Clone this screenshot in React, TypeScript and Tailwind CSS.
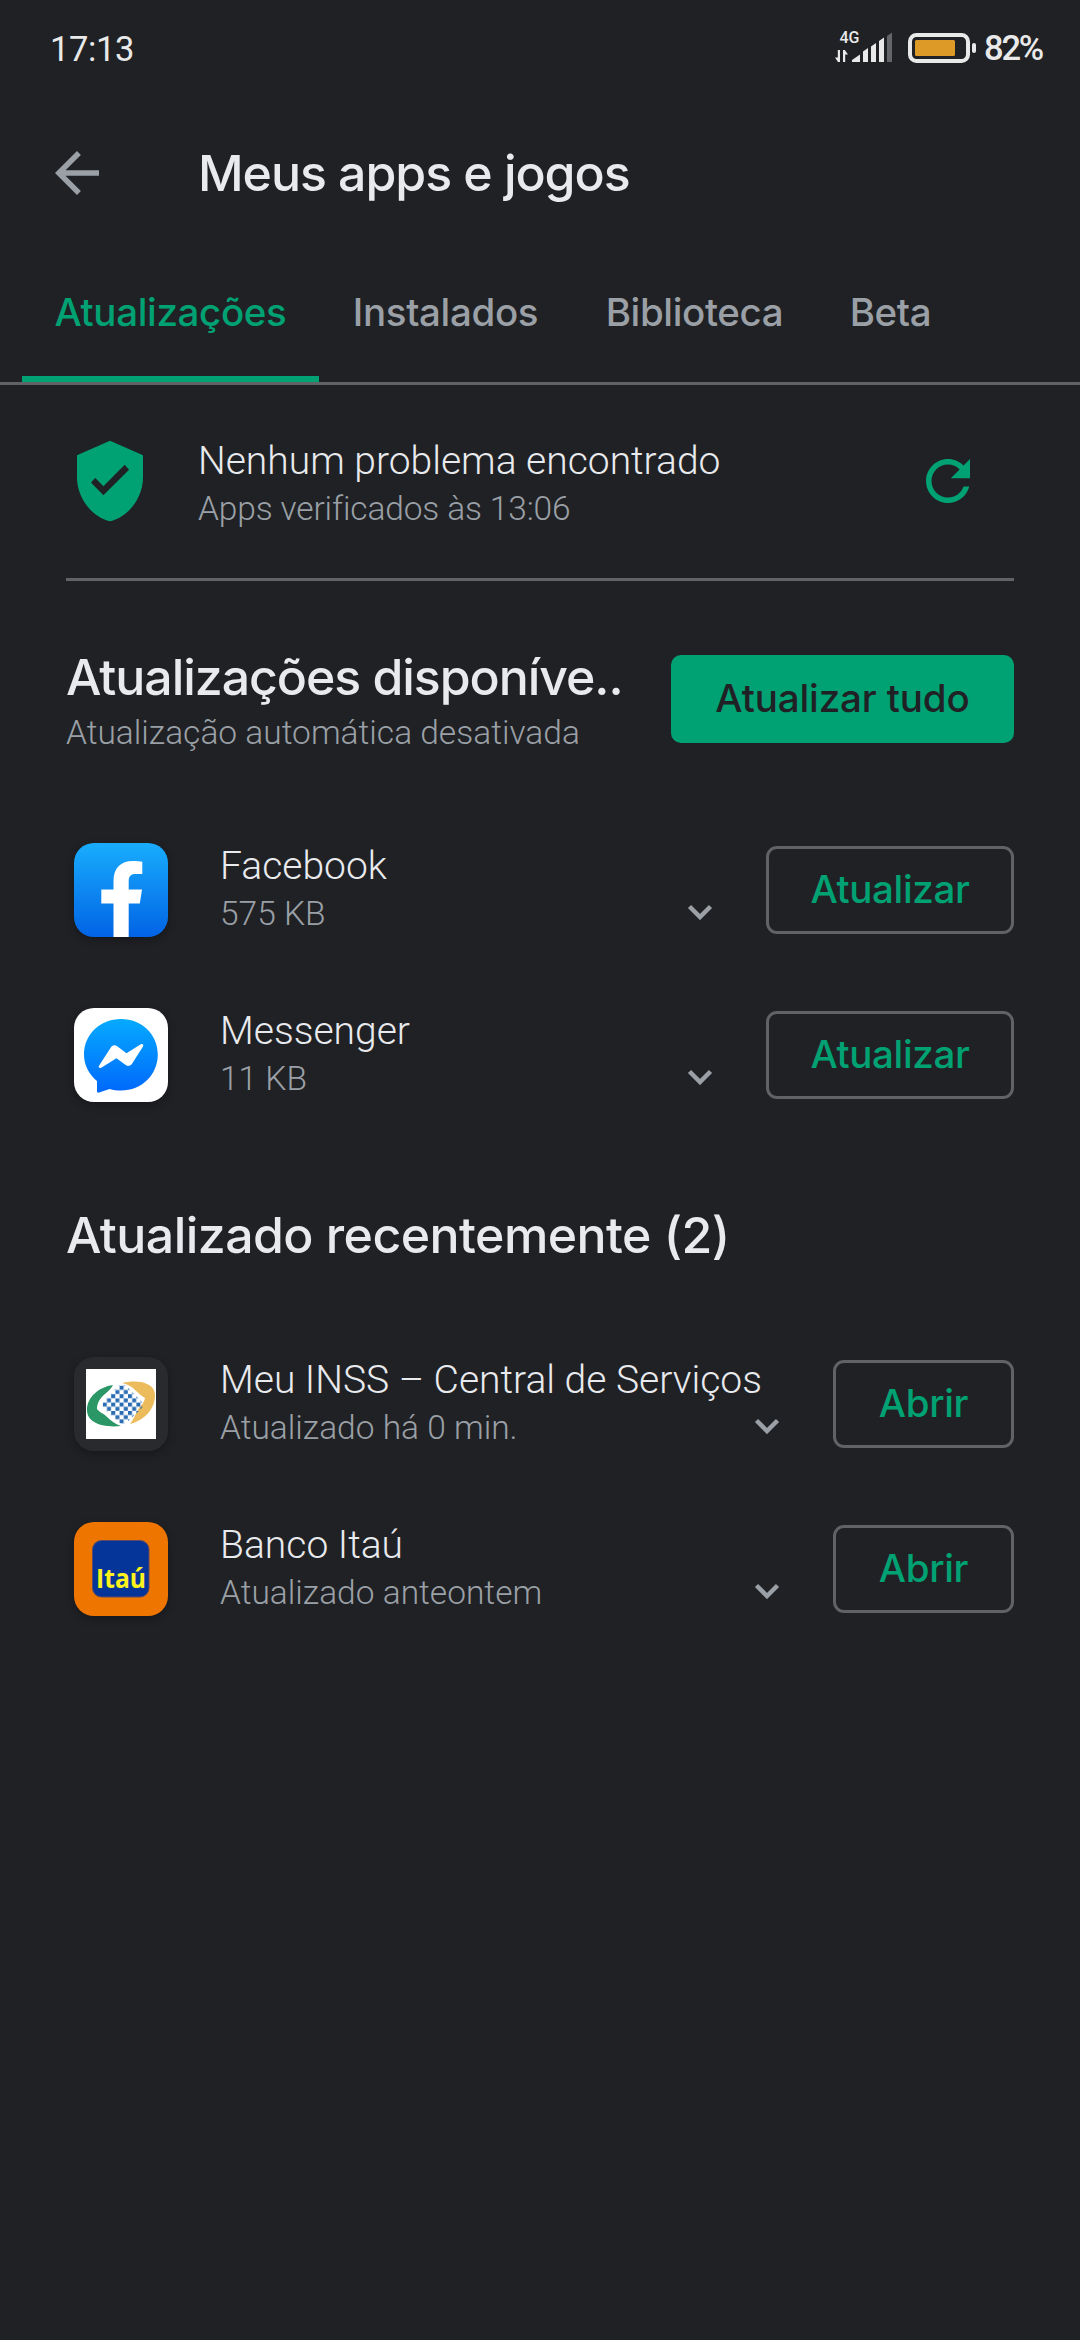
import React from "react";
import clsx from "clsx";

type AppItem = {
  name: string;
  detail: string;
  action: string;
  icon: React.ReactNode;
};

const FacebookIcon = () => (
  <svg className="size-full" viewBox="0 0 94 94">
    <defs>
      <linearGradient id="fb" x1="0" y1="0" x2="0" y2="1">
        <stop offset="0" stopColor="#19adfe" />
        <stop offset="1" stopColor="#0163e4" />
      </linearGradient>
    </defs>
    <rect width="94" height="94" fill="url(#fb)" />
    <path
      d="M39.5 94V60.5H27.3V46.5H39.5V38C39.5 25 46.5 18 59 18c4 0 7 .2 9.3.7V31H61.5C56.5 31 54.7 33.5 54.7 38.5V46.5H68l-2.2 14H54.7V94z"
      fill="#fff"
    />
  </svg>
);

const MessengerIcon = () => (
  <svg className="size-full" viewBox="0 0 94 94">
    <defs>
      <linearGradient id="msg" x1="0" y1="0" x2="0" y2="1">
        <stop offset="0" stopColor="#06aaff" />
        <stop offset="1" stopColor="#0068fb" />
      </linearGradient>
    </defs>
    <rect width="94" height="94" fill="#fff" />
    <path
      d="M47 11C26 11 10 26.500 10 46.500c0 10.500 5 20 13 26.500v10.300c0 1 1 1.700 2 1.300l10.700-3.600c3.600 1 7.300 1.500 11.300 1.500 21 0 36.800-16 36.800-36S68 11 47 11z"
      fill="url(#msg)"
    />
    <path
      d="M25 57.800 36.800 39.500c1.500-2.300 4.200-2.800 6.400-1.300l9.300 7L66.800 36.300c1.700-1 3.200.5 2.200 2.100L58.200 55.500c-1.500 2.400-4.300 3-6.500 1.400l-9.200-6.700L27.200 59.800c-1.600.8-3.200-.6-2.200-2z"
      fill="#fff"
    />
  </svg>
);

const InssIcon = () => (
  <div className="size-full bg-[#292a2e] p-3">
    <svg className="size-full bg-white" viewBox="0 0 70 70">
      <defs>
        <pattern id="check" width="8.4" height="8.4" patternUnits="userSpaceOnUse">
          <rect width="4" height="4" fill="#2a6cb2" />
          <rect x="4.200" y="4.200" width="4" height="4" fill="#2a6cb2" />
        </pattern>
      </defs>
      <path
        d="M27 16C13 18 1 28 1 41c0 12 14 18 34 16-6-2-11-6-15-10-3-3-6-3-9-7 0-6 3-11 8-15 3-3 6-5 8-9z"
        fill="#2b9767"
      />
      <path
        d="M36 14c17-4 33 0 33 12 0 14-10 25-25 29 4-5 6-11 9-16 3-4 5-5 6-10-4-2-6-5-10-8-4-4-8-6-13-7z"
        fill="#ebbb5c"
      />
      <path d="M32 17q5-3 9 1l14 14q4 4 0 8L41 53q-5 4-9 0L18 40q-3-4 0-8z" fill="url(#check)" />
    </svg>
  </div>
);

const ItauIcon = () => (
  <svg className="size-full" viewBox="0 0 94 94">
    <rect width="94" height="94" fill="#ee7500" />
    <rect x="18.500" y="18.500" width="56.500" height="56.500" rx="9" fill="#06359a" stroke="#5d4a68" />
    <text
      x="22"
      y="65.500"
      textLength="50"
      lengthAdjust="spacingAndGlyphs"
      className="font-['Open_Sans'] text-[26px] font-bold"
      fill="#fdf21d"
    >
      Itaú
    </text>
  </svg>
);

const pending: AppItem[] = [
  { name: "Facebook", detail: "575 KB", action: "Atualizar", icon: <FacebookIcon /> },
  { name: "Messenger", detail: "11 KB", action: "Atualizar", icon: <MessengerIcon /> },
];

const recent: AppItem[] = [
  {
    name: "Meu INSS – Central de Serviços",
    detail: "Atualizado há 0 min.",
    action: "Abrir",
    icon: <InssIcon />,
  },
  { name: "Banco Itaú", detail: "Atualizado anteontem", action: "Abrir", icon: <ItauIcon /> },
];

const StatusBar = () => (
  <div className="flex h-[95px] justify-between pl-[50px] pr-[36px] text-[#e9e9e9]">
    <span className="mt-[29px] text-[34.500px] leading-10 tracking-[-0.400px]">17:13</span>
    <div className="flex">
      <svg className="mt-7 h-9 w-[60px]" viewBox="833 28 60 36" fill="#e9e9e9">
        <text x="838.500" y="43" className="text-[16px] font-medium" textLength="20">
          4G
        </text>
        <path d="M836.800 50h2.200v12h-2l-3-4.500h2.800zM842 50h1.800l3.200 4.500h-2.800V62H842z" />
        <path d="M851 60l8-5.500V62h-8zM862 51.500l5-3.500v14h-5zM870 46.500l5-3.500v19h-5zM878 41l5-3.500V62h-5z" />
        <path d="M886 36l5-3.500V62h-5z" fill="#646568" />
      </svg>
      <svg className="ml-3 mt-8 h-8 w-[72px]" viewBox="905 32 72 32">
        <rect x="909" y="35" width="58" height="26" rx="6.500" fill="none" stroke="#e9e9e9" strokeWidth="4" />
        <rect x="914" y="40" width="40" height="16" rx="1.500" fill="#de9a27" />
        <rect x="971" y="43" width="4" height="10" rx="2" fill="#e9e9e9" />
      </svg>
      <span className="ml-[6px] mt-7 w-[60px] whitespace-nowrap text-[34.500px] font-medium leading-10 tracking-[-2.200px]">
        82%
      </span>
    </div>
  </div>
);

const TopBar = () => (
  <header className="flex h-[156px] items-center pl-11">
    <svg className="size-[66px]" viewBox="0 0 24 24" fill="#9aa0a6">
      <path d="M20 11H7.830l5.590-5.590L12 4l-8 8 8 8 1.410-1.410L7.830 13H20v-2z" />
    </svg>
    <h1 className="ml-[88px] font-['Inter'] text-[50px] font-medium leading-[60px] tracking-[-1.050px] text-[#e8eaed]">
      Meus apps e jogos
    </h1>
  </header>
);

const Tabs = () => (
  <nav className="flex h-[134px] border-b-[3px] border-[#606266] pl-[22px] font-['Inter'] text-[38.500px] font-medium tracking-[-0.350px] text-[#9aa0a6]">
    <div className="flex w-[297px] items-center justify-center border-b-[6px] border-[#00a173] pb-[2px] text-[#00a173]">
      Atualizações
    </div>
    <div className="flex w-[253px] items-center justify-center pb-2">Instalados</div>
    <div className="flex w-[245px] items-center justify-center pb-2">Biblioteca</div>
    <div className="flex w-[147px] items-center justify-center pb-2">Beta</div>
  </nav>
);

const AppRow = ({ item }: { item: AppItem }) => (
  <li className="flex h-[165px] items-start pl-2 pt-[35px]">
    <div className="size-[94px] shrink-0 overflow-hidden rounded-[20px] shadow-[0_3px_8px_rgba(0,0,0,0.3)]">
      {item.icon}
    </div>
    <div className="-mt-px ml-[52px] flex-1 whitespace-nowrap font-light">
      <p className="text-[39px] leading-[48px] text-[#e8eaed]">{item.name}</p>
      <div className="flex justify-between">
        <p className="text-[33.500px] leading-[48px] text-[#9aa0a6]">{item.detail}</p>
        <svg className="mr-[53px] mt-[14px] h-4 w-[26px]" viewBox="0 0 26 16" fill="none">
          <path d="M2.500 2.500 13 13 23.500 2.500" stroke="#9aa0a6" strokeWidth="4.500" />
        </svg>
      </div>
    </div>
    <button
      className={clsx(
        "mt-[3px] h-[88px] shrink-0 rounded-[11px] border-[3px] border-[#606266] font-['Inter'] text-[38.500px] font-medium tracking-[-0.350px] text-[#00a173]",
        item.action === "Abrir" ? "w-[181px]" : "w-[248px]",
      )}
    >
      {item.action}
    </button>
  </li>
);

export default function App() {
  return (
    <div className="h-[2340px] w-[1080px] overflow-hidden bg-[#202125] font-['Roboto',sans-serif]">
      <StatusBar />
      <TopBar />
      <Tabs />

      <main className="px-[66px]">
        <section className="flex h-[196px] items-start border-b-[3px] border-[#626366] pt-[52px]">
          <svg className="size-[88px]" viewBox="0 0 24 24" fill="#00a173">
            <path d="M12 1L3 5v6c0 5.550 3.840 10.740 9 12 5.160-1.260 9-6.450 9-12V5l-9-4z" />
            <path d="M10.200 15.900 6.800 12.400 8 11.200 10.200 13.400 16 7.600 17.200 8.900z" fill="#202125" />
          </svg>
          <div className="ml-11 flex-1 font-light leading-[48px]">
            <p className="text-[39px] text-[#e8eaed]">Nenhum problema encontrado</p>
            <p className="text-[33.500px] tracking-[-0.150px] text-[#9aa0a6]">Apps verificados às 13:06</p>
          </div>
          <svg className="mr-[33px] mt-[11px] size-[66px]" viewBox="0 0 24 24" fill="#00a173">
            <path d="M17.650 6.350C16.200 4.900 14.210 4 12 4c-4.420 0-7.990 3.580-7.990 8s3.570 8 7.990 8c3.730 0 6.840-2.550 7.730-6h-2.080c-.82 2.330-3.040 4-5.650 4-3.310 0-6-2.690-6-6s2.690-6 6-6c1.660 0 3.140.69 4.220 1.780L13 11h7V4l-2.350 2.350z" />
          </svg>
        </section>

        <section className="mt-[66px] flex h-[110px] justify-between">
          <div className="whitespace-nowrap">
            <h2 className="font-['Inter'] text-[50px] font-medium leading-[60px] tracking-[-1.050px] text-[#e8eaed]">
              Atualizações disponíve..
            </h2>
            <p className="text-[33.500px] font-light leading-[52px] text-[#9aa0a6]">
              Atualização automática desativada
            </p>
          </div>
          <button className="mt-2 h-[88px] w-[343px] shrink-0 rounded-[10px] bg-[#00a173] font-['Inter'] text-[38.500px] font-medium tracking-[-0.100px] text-[#202125]">
            Atualizar tudo
          </button>
        </section>

        <ul className="mt-[51px]">
          {pending.map((item) => (
            <AppRow key={item.name} item={item} />
          ))}
        </ul>

        <h2 className="mt-[67px] font-['Inter'] text-[50px] font-medium leading-[60px] tracking-[-0.550px] text-[#e8eaed]">
          Atualizado recentemente (2)
        </h2>

        <ul className="mt-[57px]">
          {recent.map((item) => (
            <AppRow key={item.name} item={item} />
          ))}
        </ul>
      </main>
    </div>
  );
}
